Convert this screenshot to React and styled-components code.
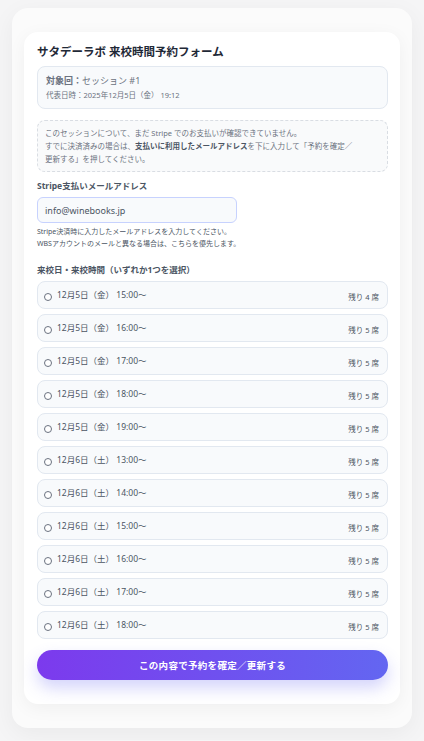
import React from "react";
import styled, { createGlobalStyle } from "styled-components";

const Global = createGlobalStyle`
  html, body { margin: 0; padding: 0; }
  body {
    background: #f5f5f6;
    font-family: "Noto Sans", "Noto Sans CJK JP", sans-serif;
    color: #1f2937;
  }
`;

const Page = styled.div`
  padding: 8px 12px 12px;
`;

const Outer = styled.div`
  background: #fbfbfb;
  border-radius: 16px;
  padding: 24px 12px 24px;
  box-shadow: 0 6px 24px rgba(0, 0, 0, 0.05);
`;

const Card = styled.div`
  background: #ffffff;
  border-radius: 14px;
  padding: 12px 12px 24px 13px;
  box-shadow: 0 4px 18px rgba(0, 0, 0, 0.05);
`;

const Title = styled.h1`
  margin: 0 0 6px;
  font-size: 11.5px;
  font-weight: 700;
  color: #1f2937;
  line-height: 16px;
`;

const InfoBox = styled.div`
  background: #f8fafc;
  border: 1px solid #e2e8f0;
  border-radius: 8px;
  padding: 7px 8px;
  display: flex;
  flex-direction: column;
  gap: 3px;
`;

const InfoMain = styled.div`
  font-size: 9px;
  line-height: 13px;
  color: #6b7280;
  b { font-weight: 700; }
`;

const InfoSub = styled.div`
  font-size: 7.5px;
  line-height: 11px;
  color: #6b7280;
`;

const Notice = styled.div`
  margin-top: 11px;
  background: #f9fafb;
  border: 1px dashed #d9dde3;
  border-radius: 8px;
  padding: 6px 7px 5px;
  font-size: 7.5px;
  line-height: 13px;
  color: #6b7280;
  b { font-weight: 700; color: #4b5563; }
`;

const Label = styled.div`
  margin-top: ${(p) => p.$mt}px;
  font-size: 8.5px;
  font-weight: 700;
  line-height: 12px;
  color: #4b5563;
`;

const Input = styled.input`
  display: block;
  box-sizing: border-box;
  margin-top: 5px;
  width: 200px;
  height: 26px;
  border: 1px solid #c7d2fe;
  border-radius: 6px;
  background: #f8fafc;
  padding: 0 7px;
  font-family: inherit;
  font-size: 9px;
  color: #4b5563;
  outline: none;
`;

const Help = styled.div`
  margin-top: 3px;
  font-size: 7px;
  line-height: 12px;
  color: #4b5563;
`;

const SlotList = styled.div`
  margin-top: 5px;
  display: flex;
  flex-direction: column;
  gap: 5px;
`;

const Slot = styled.label`
  box-sizing: border-box;
  height: 28px;
  display: flex;
  align-items: center;
  gap: 5px;
  padding: 0 8px 0 6px;
  background: #f8fafc;
  border: 1px solid #e2e8f0;
  border-radius: 8px;
`;

const Radio = styled.span`
  box-sizing: border-box;
  width: 8px;
  height: 8px;
  border-radius: 50%;
  border: 1px solid #6b7280;
  background: #fff;
  margin-top: 4px;
  flex: none;
`;

const SlotText = styled.span`
  flex: 1;
  font-size: 8.5px;
  color: #4b5563;
  margin-top: -2px;
`;

const Seats = styled.span`
  font-size: 7.5px;
  color: #4b5563;
  margin-top: 2px;
`;

const Button = styled.button`
  display: block;
  margin-top: 11px;
  width: 100%;
  height: 30px;
  border: none;
  border-radius: 999px;
  background: linear-gradient(90deg, #7c3aed 0%, #6366f1 100%);
  color: #fff;
  font-family: inherit;
  font-size: 9.5px;
  font-weight: 700;
  letter-spacing: 0.3px;
  box-shadow: 0 8px 16px rgba(99, 102, 241, 0.28);
`;

const slots = [
  ["12月5日（金） 15:00〜", "残り 4 席"],
  ["12月5日（金） 16:00〜", "残り 5 席"],
  ["12月5日（金） 17:00〜", "残り 5 席"],
  ["12月5日（金） 18:00〜", "残り 5 席"],
  ["12月5日（金） 19:00〜", "残り 5 席"],
  ["12月6日（土） 13:00〜", "残り 5 席"],
  ["12月6日（土） 14:00〜", "残り 5 席"],
  ["12月6日（土） 15:00〜", "残り 5 席"],
  ["12月6日（土） 16:00〜", "残り 5 席"],
  ["12月6日（土） 17:00〜", "残り 5 席"],
  ["12月6日（土） 18:00〜", "残り 5 席"],
];

export default function App() {
  return (
    <>
      <Global />
      <Page>
        <Outer>
          <Card>
            <Title>サタデーラボ 来校時間予約フォーム</Title>
            <InfoBox>
              <InfoMain>
                <b>対象回：</b>セッション #1
              </InfoMain>
              <InfoSub>代表日時：2025年12月5日（金） 19:12</InfoSub>
            </InfoBox>
            <Notice>
              このセッションについて、まだ Stripe でのお支払いが確認できていません。
              <br />
              すでに決済済みの場合は、<b>支払いに利用したメールアドレス</b>を下に入力して「予約を確定／
              <br />
              更新する」を押してください。
            </Notice>
            <Label $mt={8}>Stripe支払いメールアドレス</Label>
            <Input defaultValue="info@winebooks.jp" />
            <Help>
              Stripe決済時に入力したメールアドレスを入力してください。
              <br />
              WBSアカウントのメールと異なる場合は、こちらを優先します。
            </Help>
            <Label $mt={14}>来校日・来校時間（いずれか1つを選択）</Label>
            <SlotList>
              {slots.map(([t, s]) => (
                <Slot key={t}>
                  <Radio />
                  <SlotText>{t}</SlotText>
                  <Seats>{s}</Seats>
                </Slot>
              ))}
            </SlotList>
            <Button>この内容で予約を確定／更新する</Button>
          </Card>
        </Outer>
      </Page>
    </>
  );
}
